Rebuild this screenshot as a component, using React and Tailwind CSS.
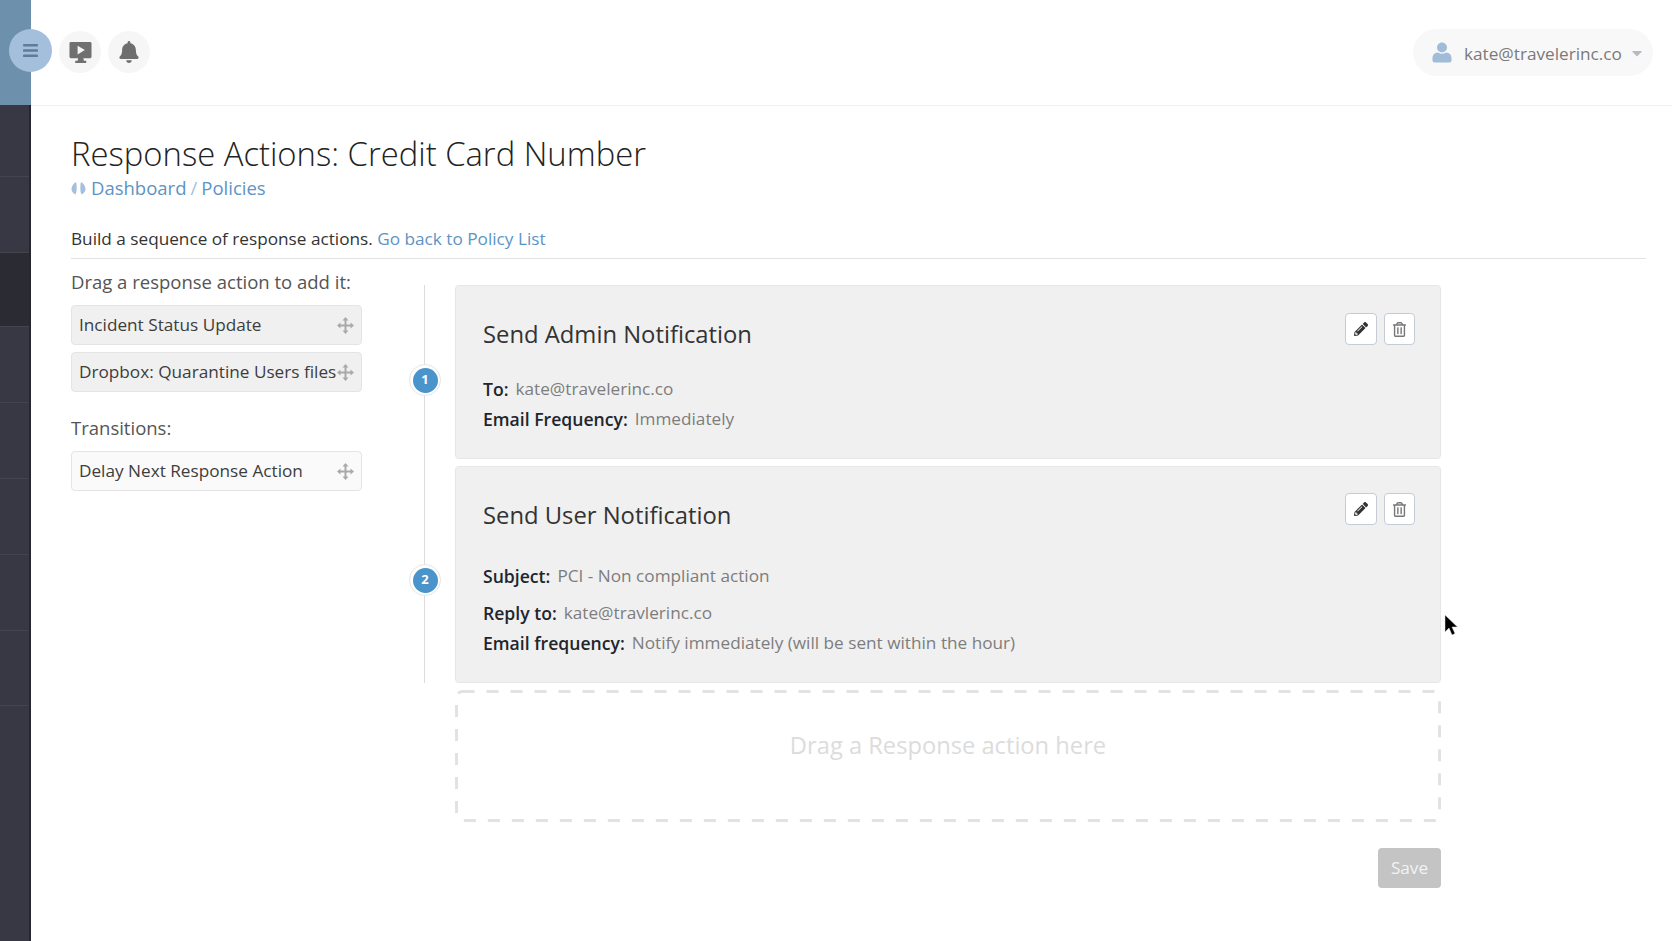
import React from "react";
import { FaBell, FaPencilAlt, FaRegTrashAlt, FaCaretDown, FaBars } from "react-icons/fa";

const sidebarRows = [
  { height: "h-[72px]" },
  { height: "h-[76px]" },
  { height: "h-[74px]", dark: true },
  { height: "h-[76px]" },
  { height: "h-[76px]" },
  { height: "h-[76px]" },
  { height: "h-[76px]" },
  { height: "h-[75px]" },
];

const MoveIcon = () => (
  <svg width="17" height="17" viewBox="0 0 17 17" className="shrink-0">
    <path
      fill="#a9a9a9"
      d="M8.500 0L11.500 3.500H9.500V7.500H13.500V5.500L17 8.500L13.500 11.500V9.500H9.500V13.500H11.500L8.500 17L5.500 13.500H7.500V9.500H3.500V11.500L0 8.500L3.500 5.500V7.500H7.500V3.500H5.500z"
    />
  </svg>
);

const Field = ({ label, value, className = "" }) => (
  <p className={`flex gap-[7px] leading-[30px] ${className}`}>
    <span className="text-[17.6px] font-semibold text-[#22252b]">{label}</span>
    <span className="text-[#7d7d7d]">{value}</span>
  </p>
);

const DragItem = ({ label, light }) => (
  <div
    className={`flex h-[40px] items-center justify-between rounded-[4px] border border-[#e4e4e4] pl-[7px] pr-[7px] text-[#3d3d3d] ${
      light ? "bg-[#fafafa]" : "bg-[#f0f0f0]"
    }`}
  >
    <span className="whitespace-nowrap">{label}</span>
    <MoveIcon />
  </div>
);

const Card = ({ title, height, badge, badgeTop, actionsTop, children }) => (
  <div className="flex">
    <div className={`relative w-[60px] shrink-0 ${height}`}>
      <div
        className={`absolute left-[14px] flex h-[32px] w-[32px] items-center justify-center rounded-full border border-[#e6e6e6] bg-white ${badgeTop}`}
      >
        <span className="flex h-[25px] w-[25px] items-center justify-center rounded-full bg-[#4a94cb] text-[13px] font-bold text-white">
          {badge}
        </span>
      </div>
    </div>
    <div className={`relative w-[986px] rounded-[4px] border border-[#e6e6e6] bg-[#f0f0f0] pl-[27px] ${height}`}>
      <div className={`absolute right-[25px] flex gap-[7px] ${actionsTop}`}>
        <button className="flex h-[32px] w-[32px] items-center justify-center rounded-[4px] border border-[#c5ccd6] bg-white text-[#333]">
          <FaPencilAlt className="h-[14px] w-[14px]" />
        </button>
        <button className="flex h-[32px] w-[31px] items-center justify-center rounded-[4px] border border-[#c5ccd6] bg-white text-[#777]">
          <FaRegTrashAlt className="h-[15px] w-[15px]" />
        </button>
      </div>
      <h2 className="pt-[32px] text-[23.8px] leading-[33px] text-[#333]">{title}</h2>
      {children}
    </div>
  </div>
);

const App = () => {
  return (
    <div className="relative flex h-[941px] w-full overflow-hidden bg-white font-['Open_Sans',sans-serif] text-[17.2px] text-[#333]">
      <aside className="w-[31px] shrink-0 bg-[#383844]">
        <div className="h-[105px] bg-[#6d90ad]" />
        <div className="h-[836px] border-r-2 border-[#26262e]">
          {sidebarRows.map((row, idx) => (
            <div key={idx} className={`${row.height} border-b border-[#44444f] ${row.dark ? "bg-[#2b2b33]" : ""}`} />
          ))}
        </div>
      </aside>

      <div className="min-w-0 flex-1">
        <header className="flex h-[106px] items-start justify-between border-b border-[#f0f0f0] pr-[19px]">
          <div className="-ml-[22px] flex items-start pt-[29px]">
            <button className="flex h-[43px] w-[43px] items-center justify-center rounded-full bg-[#a4bfdc] text-[#5f7c96]">
              <FaBars className="h-[17px] w-[17px]" />
            </button>
            <button className="ml-[7px] mt-[2px] flex h-[42px] w-[42px] items-center justify-center rounded-full bg-[#f6f6f6]">
              <svg width="23" height="23" viewBox="0 0 24 24">
                <path fill="#707070" d="M2 1h20a1.500 1.500 0 0 1 1.500 1.500v14a1.500 1.500 0 0 1-1.500 1.500h-7l.5 2.500h2.500V23H6.500v-2.500H9L9.500 18H2a1.500 1.500 0 0 1-1.500-1.500v-14A1.500 1.500 0 0 1 2 1z" />
                <path fill="#f6f6f6" d="M9 5l7.500 4.500L9 14z" />
              </svg>
            </button>
            <button className="ml-[7px] mt-[2px] flex h-[42px] w-[42px] items-center justify-center rounded-full bg-[#f6f6f6] text-[#6e6e6e]">
              <FaBell className="h-[22px] w-[22px]" />
            </button>
          </div>
          <div className="mt-[29px] flex h-[47px] w-[240px] items-center rounded-full bg-[#f8f8f8] pl-[19px] text-[#7a7a7a]">
            <svg width="20" height="21" viewBox="0 0 20 21">
              <circle cx="10" cy="5.500" r="5" fill="#a0bcd8" />
              <path fill="#a0bcd8" d="M6 10.500c1.200.8 2.500 1.200 4 1.200s2.800-.4 4-1.200c3.500.3 5.500 2.500 5.500 5.500v2.500c0 1.200-1 2-2 2h-15c-1 0-2-.8-2-2V16c0-3 2-5.200 5.500-5.500z" />
            </svg>
            <span className="ml-[12px] pt-[2px]">kate@travelerinc.co</span>
            <FaCaretDown className="ml-[7px] h-[16px] w-[16px] text-[#b9b9c4]" />
          </div>
        </header>

        <main className="pl-[40px] pr-[26px]">
          <h1 className="pt-[25px] text-[32.8px] font-light leading-[45px] text-[#222]">
            Response Actions: Credit Card Number
          </h1>
          <div className="flex h-[24px] items-center text-[18.5px] text-[#5c94c5]">
            <svg width="15" height="15" viewBox="0 0 15 15" className="mr-[5px]">
              <path fill="#a5c0dc" d="M5 1C2 3 .5 5.500.5 8c0 2.500 1.500 4.500 4 5.500C6 11 6 4 5 1z" />
              <path fill="#a5c0dc" d="M10 1c3 2 4.500 4.500 4.500 7 0 2.500-1.500 4.500-4 5.500C9 11 9 4 10 1z" />
            </svg>
            <span>Dashboard</span>
            <span className="mx-[4px] text-[#a5c0dc]">/</span>
            <span>Policies</span>
          </div>

          <p className="mt-[26px] border-b border-[#e2e2e2] pb-[6px] leading-[26px]">
            Build a sequence of response actions. <span className="text-[#5c94c5]">Go back to Policy List</span>
          </p>

          <div className="flex pt-[12px]">
            <div className="w-[291px] shrink-0 text-[#555]">
              <p className="text-[18.5px] leading-[22px]">Drag a response action to add it:</p>
              <div className="mt-[12px] flex flex-col gap-[7px]">
                <DragItem label="Incident Status Update" />
                <DragItem label="Dropbox: Quarantine Users files" />
              </div>
              <p className="mt-[25px] text-[18.5px] leading-[22px]">Transitions:</p>
              <div className="mt-[12px]">
                <DragItem label="Delay Next Response Action" light />
              </div>
            </div>

            <div className="ml-[33px] pt-[14px]">
              <div className="relative flex flex-col gap-[7px]">
                <div className="absolute bottom-0 left-[29px] top-0 w-px bg-[#dcdcdc]" />
                <Card title="Send Admin Notification" height="h-[174px]" badge="1" badgeTop="top-[79px]" actionsTop="top-[27px]">
                  <Field label="To:" value="kate@travelerinc.co" className="mt-[23px]" />
                  <Field label="Email Frequency:" value="Immediately" />
                </Card>
                <Card title="Send User Notification" height="h-[217px]" badge="2" badgeTop="top-[98px]" actionsTop="top-[26px]">
                  <Field label="Subject:" value="PCI - Non compliant action" className="mt-[29px]" />
                  <Field label="Reply to:" value="kate@travlerinc.co" className="mt-[7px]" />
                  <Field label="Email frequency:" value="Notify immediately (will be sent within the hour)" />
                </Card>
              </div>
              <div className="relative ml-[60px] mt-[7px] flex h-[132px] w-[986px] justify-center pt-[39px] text-[23.7px] leading-[33px] text-[#dcdcdc]">
                <svg width="986" height="132" className="absolute left-0 top-0">
                  <rect x="1.500" y="1.500" width="983" height="129" rx="6" fill="none" stroke="#e2e2e2" strokeWidth="3" strokeDasharray="12 12" />
                </svg>
                Drag a Response action here
              </div>
              <div className="mt-[26px] flex justify-end">
                <button className="h-[40px] w-[63px] rounded-[4px] bg-[#c4c4c4] text-[#f2f2f2]">Save</button>
              </div>
            </div>
          </div>
        </main>
      </div>

      <svg width="16" height="24" viewBox="0 0 16 24" className="absolute left-[1444px] top-[614px]">
        <path fill="#000" stroke="#ddd" strokeWidth="0.5" d="M1 1v17l4-4 3 7 3-1.500-3-6.500h5.500z" />
      </svg>
    </div>
  );
};

export default App;
